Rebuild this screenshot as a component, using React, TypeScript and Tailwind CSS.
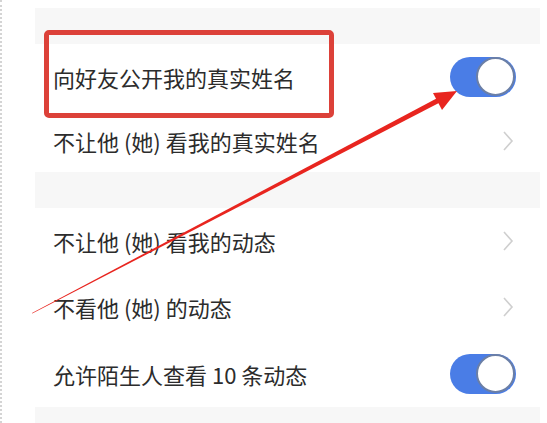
const Toggle = () => (
  <div className="w-[66px] h-[40px] rounded-full bg-[#4a7de6] flex items-center justify-end pr-[1px]">
    <div className="w-[39px] h-[39px] rounded-full bg-white border-2 border-[#6b7fa6]" />
  </div>
);

const Chevron = () => (
  <svg width="12" height="22" viewBox="0 0 12 22" className="mr-[2px]">
    <polyline points="2,2 10,11 2,20" fill="none" stroke="#cfcfcf" strokeWidth="1.6" />
  </svg>
);

interface RowProps {
  label: string;
  right: "toggle" | "chevron";
  h: string;
}

const Row = ({ label, right, h }: RowProps) => (
  <div className={`flex items-center justify-between pl-[18px] pr-[24px] bg-white ${h}`}>
    <span className="text-[22px] text-[#2c2c2c] leading-none">{label}</span>
    {right === "toggle" ? <Toggle /> : <Chevron />}
  </div>
);

export default function App() {
  return (
    <div
      className="relative w-[547px] h-[423px] overflow-hidden bg-white flex"
      style={{ fontFamily: '"Noto Sans CJK SC", "Noto Sans", sans-serif' }}
    >
      <div className="w-[2px] h-full border-l-2 border-dotted border-[#d4d4d4]" />
      <div className="flex-1 pl-[33px] pr-[7px] flex flex-col">
        <div className="h-[8px] bg-white" />
        <div className="h-[36px] bg-[#f7f7f7]" />
        <Row label="向好友公开我的真实姓名" right="toggle" h="h-[65px]" />
        <Row label="不让他 (她) 看我的真实姓名" right="chevron" h="h-[63px]" />
        <div className="h-[36px] bg-[#f7f7f7]" />
        <Row label="不让他 (她) 看我的动态" right="chevron" h="h-[66px]" />
        <Row label="不看他 (她) 的动态" right="chevron" h="h-[66px]" />
        <Row label="允许陌生人查看 10 条动态" right="toggle" h="h-[67px]" />
        <div className="flex-1 bg-[#f7f7f7]" />
      </div>

      {/* annotation box */}
      <div className="absolute left-[44px] top-[30px] w-[290px] h-[88px] border-[5px] border-[#dc4139] rounded-[5px]" />

      {/* annotation arrow */}
      <svg className="absolute left-0 top-0" width="547" height="423" viewBox="0 0 547 423">
        <polygon points="32,313 32.3,313.6 440.3,102.3 437.9,97.7" fill="#e8251f" />
        <polygon points="457,91 433,93 442,110" fill="#e8251f" />
      </svg>
    </div>
  );
}
